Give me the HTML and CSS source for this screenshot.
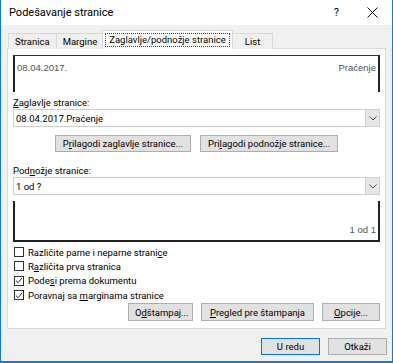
FILE: index.html
```html
<!DOCTYPE html>
<html lang="sr">
<head>
    <meta charset="UTF-8">
    <title>Podešavanje stranice</title>
    <link rel="stylesheet" href="styles.css">
</head>
<body>
    <div class="window">
        <div class="titlebar">
            <span class="title">Podešavanje stranice</span>
            <span class="help">?</span>
            <span class="close">
                <svg width="11" height="11" viewBox="0 0 11 11"><path d="M0.5 0.5L10.5 10.5M10.5 0.5L0.5 10.5" stroke="#111" stroke-width="1"/></svg>
            </span>
        </div>

        <div class="content">
            <div class="tabs">
                <div class="tab">Stranica</div>
                <div class="tab">Margine</div>
                <div class="tab active"><span class="focus">Zaglavlje/podnožje stranice</span></div>
                <div class="tab">List</div>
            </div>

            <div class="panel">
                <div class="preview preview-header">
                    <span>08.04.2017.</span>
                    <span>Praćenje</span>
                </div>

                <div class="label"><u>Z</u>aglavlje stranice:</div>
                <div class="select">
                    <span class="select-text">08.04.2017.Praćenje</span>
                    <span class="arrow">
                        <svg width="8" height="5" viewBox="0 0 8 5"><path d="M0.5 0.5L4 4L7.5 0.5" fill="none" stroke="#555" stroke-width="1"/></svg>
                    </span>
                </div>

                <div class="custom-row">
                    <button class="btn">P<u>r</u>ilagodi zaglavlje stranice...</button>
                    <button class="btn">Pri<u>l</u>agodi podnožje stranice...</button>
                </div>

                <div class="label">Pod<u>n</u>ožje stranice:</div>
                <div class="select">
                    <span class="select-text">1 od ?</span>
                    <span class="arrow">
                        <svg width="8" height="5" viewBox="0 0 8 5"><path d="M0.5 0.5L4 4L7.5 0.5" fill="none" stroke="#555" stroke-width="1"/></svg>
                    </span>
                </div>

                <div class="preview preview-footer">
                    <span>1 od 1</span>
                </div>

                <div class="checks">
                    <label class="check"><span class="box"></span><span>Različite parne i neparne strani<u>c</u>e</span></label>
                    <label class="check"><span class="box"></span><span>R<u>a</u>zličita prva stranica</span></label>
                    <label class="check"><span class="box"><svg width="9" height="9" viewBox="0 0 9 9"><path d="M1 4.5L3.5 7L8 1.5" fill="none" stroke="#222" stroke-width="1.1"/></svg></span><span>Pode<u>s</u>i prema dokumentu</span></label>
                    <label class="check"><span class="box"><svg width="9" height="9" viewBox="0 0 9 9"><path d="M1 4.5L3.5 7L8 1.5" fill="none" stroke="#222" stroke-width="1.1"/></svg></span><span>Poravnaj sa <u>m</u>arginama stranice</span></label>
                </div>

                <div class="print-row">
                    <button class="btn print">O<u>d</u>štampaj...</button>
                    <button class="btn wide"><u>P</u>regled pre štampanja</button>
                    <button class="btn options"><u>O</u>pcije...</button>
                </div>
            </div>

            <div class="dialog-row">
                <button class="btn dialog default">U redu</button>
                <button class="btn dialog">Otkaži</button>
            </div>
        </div>
    </div>
</body>
</html>
```

FILE: styles.css
```css
* {
    box-sizing: border-box;
    margin: 0;
    padding: 0;
}

body {
    font-family: "Segoe UI", Roboto, sans-serif;
    font-size: 9.5px;
    color: #000;
    background: #fff;
}

.window {
    width: 393px;
    height: 363px;
    display: flex;
    flex-direction: column;
    border-left: 1px solid #1979ca;
    border-right: 1px solid #1979ca;
    border-bottom: 2px solid #1979ca;
}

.titlebar {
    height: 25px;
    background: #fff;
    display: flex;
    align-items: center;
    padding-left: 8px;
}

.title {
    font-size: 11px;
    flex: 1;
}

.help {
    font-size: 11px;
    margin-right: 28px;
}

.close {
    display: flex;
    margin-right: 14px;
}

.content {
    flex: 1;
    background: #f0f0f0;
    padding: 6px 6px 0 6px;
    display: flex;
    flex-direction: column;
}

.tabs {
    display: flex;
    align-items: flex-end;
    height: 18px;
    position: relative;
    z-index: 1;
    margin-bottom: -1px;
    padding-left: 1px;
}

.tab {
    height: 16px;
    padding: 0 6px;
    border: 1px solid #d9d9d9;
    border-bottom: none;
    margin-right: -1px;
    display: flex;
    align-items: center;
    background: #f0f0f0;
}

.tab.active {
    height: 19px;
    background: #fff;
    padding: 0 2px;
    margin-left: -1px;
    padding-bottom: 1px;
}

.tab:last-child {
    padding: 0 12px;
}

.focus {
    border: 1px dotted #444;
    padding: 0 3px;
    line-height: 12px;
}

.panel {
    background: #fff;
    border: 1px solid #d9d9d9;
    height: 281px;
    padding: 6px 5px 0 5px;
    display: flex;
    flex-direction: column;
}

.preview {
    display: flex;
    justify-content: space-between;
    color: #555;
    font-family: "Liberation Sans", Arial, sans-serif;
    font-size: 9.5px;
    padding: 0 2px;
}

.preview-header {
    height: 37px;
    border-top: 1px solid #333;
    border-left: 2px solid #222;
    border-right: 2px solid #222;
    padding-top: 6px;
}

.preview-footer {
    height: 41px;
    margin-top: 6px;
    border-bottom: 2px solid #222;
    border-left: 2px solid #222;
    border-right: 2px solid #222;
    justify-content: flex-end;
    align-items: flex-end;
    padding-bottom: 5px;
}

.label {
    margin-top: 4px;
    height: 13px;
    line-height: 13px;
}

.select {
    height: 18px;
    border: 1px solid #cfcfcf;
    display: flex;
    align-items: center;
    justify-content: space-between;
    padding-left: 2px;
}

.arrow {
    width: 14px;
    height: 16px;
    background: #e6e6e6;
    border-left: 1px solid #d0d0d0;
    display: flex;
    align-items: center;
    justify-content: center;
}

.btn {
    font-family: inherit;
    font-size: 9.5px;
    color: #000;
    background: #e1e1e1;
    border: 1px solid #adadad;
    height: 18px;
    padding: 0 6px;
}

.custom-row {
    display: flex;
    justify-content: center;
    gap: 9px;
    margin-top: 8px;
    margin-bottom: 8px;
}

.custom-row .btn {
    height: 17px;
    padding: 0 7px;
}

.checks {
    display: flex;
    flex-direction: column;
    margin-top: 3px;
}

.check {
    display: flex;
    align-items: center;
    height: 14.3px;
}

.box {
    width: 10px;
    height: 10px;
    border: 1px solid #333;
    margin-left: 1px;
    margin-right: 4px;
    display: flex;
    align-items: center;
    justify-content: center;
    background: #fff;
}

.print-row {
    display: flex;
    justify-content: flex-end;
    gap: 8px;
    margin-top: 1px;
}

.btn.print {
    width: 65px;
}

.btn.wide {
    padding: 0 8px;
}

.btn.options {
    width: 58px;
}

.dialog-row {
    display: flex;
    justify-content: flex-end;
    gap: 8px;
    margin-top: 9px;
    margin-right: -1px;
}

.btn.dialog {
    width: 59px;
    height: 17px;
}

.btn.default {
    border-color: #0078d7;
}
```
